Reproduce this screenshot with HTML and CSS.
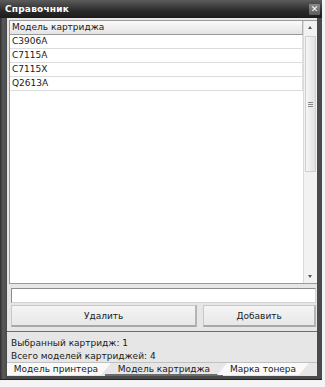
FILE: index.html
```html
<!DOCTYPE html>
<html lang="ru">
<head>
    <meta charset="UTF-8">
    <title>Справочник</title>
    <link rel="stylesheet" href="styles.css">
</head>
<body>
    <div class="window">
        <div class="titlebar">
            <span class="title">Справочник</span>
            <span class="close">✕</span>
        </div>

        <div class="content">
            <!-- Grid with scrollbar -->
            <div class="grid">
                <div class="rows">
                    <div class="grid-head">Модель картриджа</div>
                    <div class="grid-row">C3906A</div>
                    <div class="grid-row">C7115A</div>
                    <div class="grid-row">C7115X</div>
                    <div class="grid-row">Q2613A</div>
                </div>
                <div class="scrollbar">
                    <div class="arrow up"></div>
                    <div class="track">
                        <div class="thumb"><span class="grip"></span></div>
                    </div>
                    <div class="arrow down"></div>
                </div>
            </div>

            <div class="editor">
                <input class="field" type="text">
                <div class="buttons">
                    <button class="btn btn-wide">Удалить</button>
                    <button class="btn">Добавить</button>
                </div>
            </div>

            <div class="status">
                <div>Выбранный картридж: 1</div>
                <div>Всего моделей картриджей: 4</div>
            </div>

            <div class="tabs">
                <div class="tab first">Модель принтера</div>
                <div class="tab active">Модель картриджа</div>
                <div class="tab last">Марка тонера</div>
            </div>
        </div>
    </div>
</body>
</html>
```

FILE: styles.css
```css
body {
    margin: 0;
    background: #f4f4f4;
    font-family: "DejaVu Sans", Verdana, sans-serif;
    font-size: 9px;
    color: #1a1a1a;
}

.window {
    width: 322px;
    height: 380px;
    background: linear-gradient(to right, #2e2e2e 0, #5a5a5a 3px, #4a4a4a 7px);
    display: flex;
    flex-direction: column;
    box-sizing: border-box;
    border-bottom: 1px solid #222;
}

.titlebar {
    height: 18px;
    flex: none;
    display: flex;
    align-items: center;
    justify-content: space-between;
    padding: 0 2px 0 5px;
    background: linear-gradient(#5c5c5c, #2a2a2a 60%, #1c1c1c);
}

.title {
    color: #fff;
    font-weight: bold;
    font-size: 9px;
    letter-spacing: 0.2px;
}

.close {
    width: 11px;
    height: 11px;
    line-height: 11px;
    text-align: center;
    color: #fff;
    font-size: 9px;
    font-weight: bold;
    background: linear-gradient(#8a8a8a, #5c5c5c);
    border-radius: 1px;
}

.content {
    flex: 1;
    margin: 0 5px 6px 7px;
    background: #e6e6e6;
    padding: 2px 0 0 2px;
    display: flex;
    flex-direction: column;
}

/* Grid */
.grid {
    height: 264px;
    flex: none;
    display: flex;
    background: #fff;
    border: 1px solid #9a9a9a;
    border-right: none;
    box-sizing: border-box;
}

.rows {
    flex: 1;
}

.grid-head {
    height: 13px;
    line-height: 13px;
    padding-left: 2px;
    background: linear-gradient(#fafafa, #e4e4e4);
    border-bottom: 1px solid #9a9a9a;
    border-right: 1px solid #b0b0b0;
}

.grid-row {
    height: 13px;
    line-height: 13px;
    padding-left: 2px;
    border-bottom: 1px solid #dcdcdc;
    border-right: 1px solid #e0e0e0;
}

.scrollbar {
    width: 13px;
    display: flex;
    flex-direction: column;
    background: #f2f2f2;
    border-left: 1px solid #dadada;
}

.arrow {
    height: 13px;
    position: relative;
}

.arrow::after {
    content: "";
    position: absolute;
    left: 4px;
    border-left: 2.5px solid transparent;
    border-right: 2.5px solid transparent;
}

.arrow.up::after {
    top: 5px;
    border-bottom: 3px solid #555;
}

.arrow.down::after {
    top: 5px;
    border-top: 3px solid #555;
}

.track {
    flex: 1;
    padding-top: 2px;
}

.thumb {
    height: 134px;
    margin: 0 1px;
    background: linear-gradient(to right, #f6f6f6, #e2e2e2);
    border: 1px solid #d0d0d0;
    display: flex;
    align-items: center;
    justify-content: center;
}

.grip {
    width: 5px;
    height: 5px;
    background: repeating-linear-gradient(#888 0 1px, transparent 1px 2px);
}

/* Editor */
.editor {
    padding: 4px 1px 0 2px;
}

.field {
    display: block;
    width: 100%;
    height: 15px;
    margin: 0;
    box-sizing: border-box;
    border: 1px solid #8c8c8c;
    border-right-color: #d4d4d4;
    border-bottom-color: #d4d4d4;
    background: #fff;
}

.buttons {
    display: flex;
    gap: 6px;
    margin-top: 2px;
}

.btn {
    height: 22px;
    flex: 1;
    font-family: inherit;
    font-size: 9px;
    color: #1a1a1a;
    background: linear-gradient(#f4f4f4, #e8e8e8);
    border: 1px solid #c8c8c8;
    border-bottom: 2px solid #a8a8a8;
    border-right: 2px solid #b4b4b4;
    padding: 0;
}

.btn-wide {
    flex: 187;
}

.buttons .btn:last-child {
    flex: 112;
}

/* Status */
.status {
    margin: 4px 0 0 -2px;
    padding: 5px 0 0 4px;
    border-top: 1px solid #6e6e6e;
    line-height: 13px;
    height: 25px;
}

/* Tabs */
.tabs {
    margin: 0 0 0 -2px;
    display: flex;
    height: 13px;
    border-top: 1px solid #c0c0c0;
}

.tab {
    height: 12px;
    line-height: 12px;
    text-align: center;
    background: #fafafa;
}

.tab.first {
    width: 104px;
    clip-path: polygon(0 0, 100% 0, calc(100% - 10px) 100%, 0 100%);
    margin-right: -6px;
    padding-right: 6px;
    box-sizing: border-box;
}

.tab.active {
    width: 118px;
    background: #e6e6e6;
    border-bottom: 2px solid #6c6c6c;
    height: 11px;
    line-height: 13px;
}

.tab.last {
    width: 92px;
    margin-left: -6px;
    clip-path: polygon(10px 0, 100% 0, calc(100% - 10px) 100%, 0 100%);
}
```
